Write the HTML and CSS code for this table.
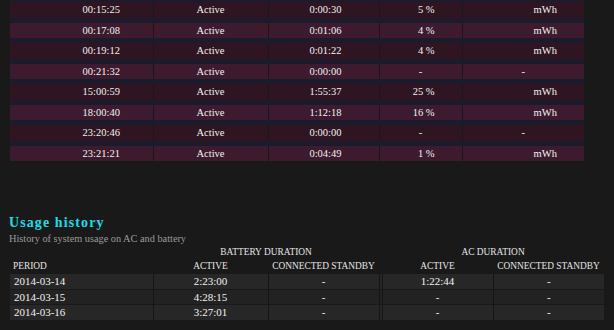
FILE: index.html
```html
<!DOCTYPE html>
<html lang="en">
<head>
<meta charset="utf-8">
<title>Battery report</title>
<link rel="stylesheet" href="styles.css">
</head>
<body>
<main class="page">
  <table class="recent">
    <colgroup>
      <col class="c-time"><col class="c-state"><col class="c-dur"><col class="c-pct"><col class="c-energy">
    </colgroup>
    <tbody>
      <tr class="odd"><td class="time">00:15:25</td><td>Active</td><td class="dur">0:00:30</td><td class="pct">5 %</td><td class="mwh">mWh</td></tr>
      <tr class="even"><td class="time">00:17:08</td><td>Active</td><td class="dur">0:01:06</td><td class="pct">4 %</td><td class="mwh">mWh</td></tr>
      <tr class="odd"><td class="time">00:19:12</td><td>Active</td><td class="dur">0:01:22</td><td class="pct">4 %</td><td class="mwh">mWh</td></tr>
      <tr class="even"><td class="time">00:21:32</td><td>Active</td><td class="dur">0:00:00</td><td>-</td><td>-</td></tr>
      <tr class="odd"><td class="time">15:00:59</td><td>Active</td><td class="dur">1:55:37</td><td class="pct">25 %</td><td class="mwh">mWh</td></tr>
      <tr class="even"><td class="time">18:00:40</td><td>Active</td><td class="dur">1:12:18</td><td class="pct">16 %</td><td class="mwh">mWh</td></tr>
      <tr class="odd"><td class="time">23:20:46</td><td>Active</td><td class="dur">0:00:00</td><td>-</td><td>-</td></tr>
      <tr class="even"><td class="time">23:21:21</td><td>Active</td><td class="dur">0:04:49</td><td class="pct">1 %</td><td class="mwh">mWh</td></tr>
    </tbody>
  </table>

  <section class="usage">
    <h2 class="title">Usage history</h2>
    <p class="subtitle">History of system usage on AC and battery</p>
    <table class="history">
      <colgroup>
        <col class="c-period"><col class="c-active"><col class="c-standby"><col class="c-gap"><col class="c-ac-active"><col class="c-ac-standby">
      </colgroup>
      <thead>
        <tr class="group">
          <th></th>
          <th colspan="2">BATTERY DURATION</th>
          <th></th>
          <th colspan="2">AC DURATION</th>
        </tr>
        <tr class="heads">
          <th class="left">PERIOD</th>
          <th>ACTIVE</th>
          <th>CONNECTED STANDBY</th>
          <th></th>
          <th>ACTIVE</th>
          <th>CONNECTED STANDBY</th>
        </tr>
      </thead>
      <tbody>
        <tr class="row-a"><td class="left">2014-03-14</td><td>2:23:00</td><td>-</td><td class="gap"></td><td>1:22:44</td><td>-</td></tr>
        <tr class="row-b"><td class="left">2014-03-15</td><td>4:28:15</td><td>-</td><td class="gap"></td><td>-</td><td>-</td></tr>
        <tr class="row-a"><td class="left">2014-03-16</td><td>3:27:01</td><td>-</td><td class="gap"></td><td>-</td><td>-</td></tr>
      </tbody>
    </table>
  </section>
</main>
</body>
</html>
```
FILE: styles.css
```css
html, body {
  margin: 0;
  padding: 0;
  background: #191919;
  color: #f2f2f2;
  font-family: "Liberation Serif", "Times New Roman", serif;
}

.page {
  padding-left: 10px;
  overflow: hidden;
  height: 330px;
}

/* recent usage list */
.recent {
  border-collapse: collapse;
  table-layout: fixed;
  width: 574px;
  margin-top: -3px;
  font-size: 10.5px;
}

.c-time { width: 143px; }
.c-state { width: 115px; }
.c-dur { width: 111px; }
.c-pct { width: 83px; }
.c-energy { width: 122px; }

.recent td {
  padding: 0;
  height: 15.5px;
  line-height: 15.5px;
  text-align: center;
  white-space: nowrap;
  border-top: 5px solid #1c1b2b;
  border-left: 1px solid #1a1619;
}

.recent td:first-child { border-left: none; }

.recent tr.odd td { background: #2e1521; }
.recent tr.even td { background: #3d1a2e; }

.recent td.time { padding-left: 40px; }
.recent td.dur { padding-left: 4px; }
.recent td.pct { text-align: right; padding-right: 27px; }
.recent td.mwh { padding-left: 44px; }

/* usage history */
.usage {
  margin-top: 54px;
}

.title {
  margin: 0 0 1px -1px;
  font-size: 14px;
  line-height: 16px;
  font-weight: bold;
  letter-spacing: 1.1px;
  color: #18dde6;
}

.subtitle {
  margin: 0 0 1px -1px;
  font-size: 10.3px;
  line-height: 13px;
  color: #9a9a9a;
}

.history {
  border-collapse: collapse;
  table-layout: fixed;
  width: 594px;
}

.c-period { width: 143px; }
.c-active { width: 115px; }
.c-standby { width: 111px; }
.c-gap { width: 3px; }
.c-ac-active { width: 111px; }
.c-ac-standby { width: 111px; }

.history th {
  padding: 0;
  font-weight: normal;
  font-size: 9.4px;
  line-height: 14px;
  color: #e6e6e6;
  text-align: center;
  white-space: nowrap;
}

.history tr.group th { line-height: 13px; }

.history th.left { text-align: left; padding-left: 3px; }

.history td {
  padding: 0;
  height: 14.5px;
  line-height: 14.5px;
  font-size: 11px;
  text-align: center;
  white-space: nowrap;
  border-top: 1.5px solid #191919;
  border-left: 1px solid #151515;
}

.history td:first-child { border-left: none; }

.history td.left { text-align: left; padding-left: 4px; }

.history tr.row-a td { background: #272727; }
.history tr.row-b td { background: #222222; }
```
